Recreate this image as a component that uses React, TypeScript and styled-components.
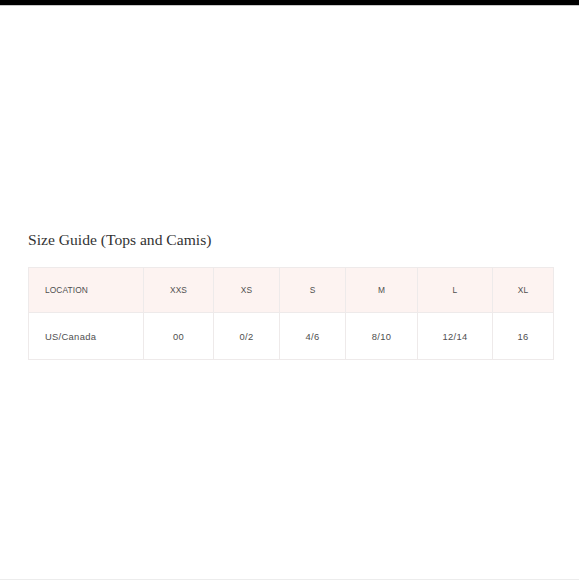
import styled, { createGlobalStyle } from 'styled-components'

const GlobalStyle = createGlobalStyle`
  html, body {
    margin: 0;
    padding: 0;
    background: #ffffff;
  }
`;

const StyledPage = styled.div`
  display: flex;
  flex-flow: column;
  width: 579px;
  height: 580px;
  box-sizing: border-box;
  border-bottom: 1px solid #ececec;
  background: #ffffff;
`;

const StyledTopBar = styled.div`
  height: 5px;
  background: #000000;
  border-bottom: 1px solid #c8c8c8;
`;

const StyledContent = styled.div`
  padding: 224px 0 0 28px;
`;

const StyledTitle = styled.h2`
  margin: 0 0 17px 0;
  font-family: "Liberation Serif", serif;
  font-weight: 400;
  font-size: 15.6px;
  line-height: 20px;
  color: #333333;
`;

const StyledTable = styled.table`
  width: 525px;
  border-collapse: collapse;
  table-layout: fixed;
  font-family: "Liberation Sans", Arial, sans-serif;
  color: #4f4f4f;
`;

const StyledHeadRow = styled.tr`
  height: 45px;
  background: #fdf3f1;
`;

const StyledBodyRow = styled.tr`
  height: 47px;
  background: #ffffff;
`;

const StyledCell = styled.td<{ $first?: boolean; $head?: boolean }>`
  border: 1px solid #eeeaea;
  padding: 0 0 0 ${p => (p.$first ? '16px' : '0')};
  text-align: ${p => (p.$first ? 'left' : 'center')};
  vertical-align: middle;
  font-size: ${p => (p.$head ? '8.4px' : '9.4px')};
  letter-spacing: ${p => (p.$head ? '0.1px' : '0.3px')};
  white-space: nowrap;
`;

const columnWidths = [115, 70, 66, 66, 72, 75, 61];
const headers = ['LOCATION', 'XXS', 'XS', 'S', 'M', 'L', 'XL'];
const sizes = ['US/Canada', '00', '0/2', '4/6', '8/10', '12/14', '16'];

export default function App() {
  return (
    <StyledPage>
      <GlobalStyle />
      <StyledTopBar />
      <StyledContent>
        <StyledTitle>Size Guide (Tops and Camis)</StyledTitle>
        <StyledTable>
          <colgroup>
            {columnWidths.map((w, i) => (
              <col key={i} style={{ width: w }} />
            ))}
          </colgroup>
          <tbody>
            <StyledHeadRow>
              {headers.map((h, i) => (
                <StyledCell key={h} $first={i === 0} $head>
                  {h}
                </StyledCell>
              ))}
            </StyledHeadRow>
            <StyledBodyRow>
              {sizes.map((s, i) => (
                <StyledCell key={s} $first={i === 0}>
                  {s}
                </StyledCell>
              ))}
            </StyledBodyRow>
          </tbody>
        </StyledTable>
      </StyledContent>
    </StyledPage>
  )
}
